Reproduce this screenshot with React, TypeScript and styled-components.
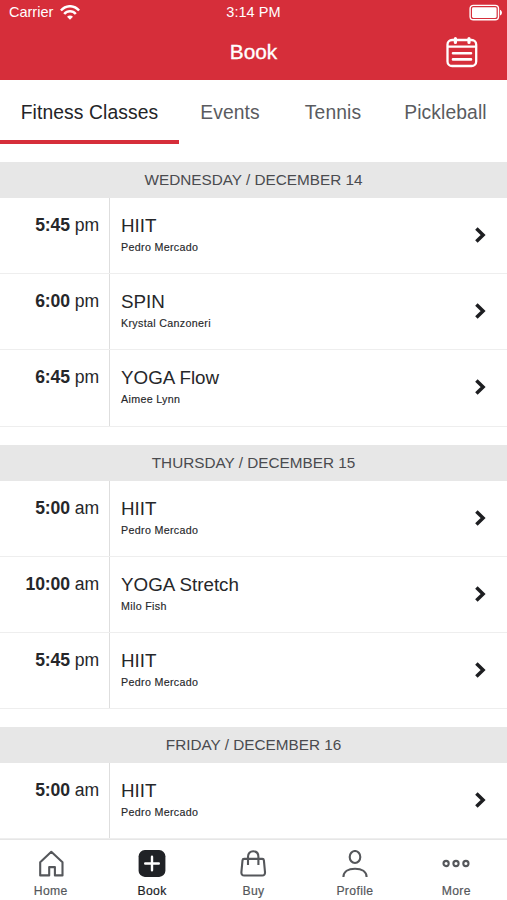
import React from "react";
import styled, { createGlobalStyle } from "styled-components";

const GlobalStyle = createGlobalStyle`
  * { box-sizing: border-box; }
  body { margin: 0; background: #fff; overflow: hidden; }
  button { font: inherit; color: inherit; background: none; border: 0; padding: 0; }
`;

const Screen = styled.div`
  width: 507px;
  height: 900px;
  display: flex;
  flex-direction: column;
  overflow: hidden;
  background: #fff;
  color: #26272a;
  font-family: "Liberation Sans", Arial, sans-serif;
  white-space: nowrap;
`;

const Top = styled.header`
  flex: none;
  height: 80.4px;
  background: #d62e3a;
  color: #fff;
`;

const StatusBar = styled.div`
  display: grid;
  grid-template-columns: 1fr auto 1fr;
  height: 26px;
  padding: 0 9px;
  font-size: 14.5px;
  line-height: 25px;
`;

const Carrier = styled.div`
  display: flex;
  gap: 7px;
  svg { margin-top: 5px; }
`;

const Clock = styled.div`
  letter-spacing: 0.05px;
`;

const Battery = styled.div`
  display: flex;
  justify-content: flex-end;
  svg { margin: 4px -5px 0 0; }
`;

const TitleBar = styled.div`
  display: grid;
  grid-template-columns: 1fr auto 1fr;
  height: 54px;
  padding: 0 29px;
`;

const Title = styled.h1`
  margin: 0;
  font-size: 20.8px;
  font-weight: 400;
  line-height: 52px;
  -webkit-text-stroke: 0.35px #fff;
`;

const CalendarButton = styled.button`
  justify-self: end;
  grid-column: 3;
  height: 32px;
  margin-top: 10px;
  svg { display: block; }
`;

const Tabs = styled.nav`
  flex: none;
  display: flex;
  height: 63.6px;
`;

const Tab = styled.button<{ $width: number; $active?: boolean }>`
  flex: none;
  width: ${(p) => p.$width}px;
  font-size: 19.3px;
  line-height: 22px;
  padding: ${(p) => (p.$active ? "5px 0 0" : "5px 0 4px")};
  border-bottom: ${(p) => (p.$active ? "4px solid #d62e3a" : "0")};
  letter-spacing: 0.1px;
  color: ${(p) => (p.$active ? "#232427" : "#5a5b60")};
`;

const Schedule = styled.main`
  flex: none;
  height: 695px;
  padding-top: 18px;
  overflow: hidden;
`;

const Day = styled.section`
  margin-bottom: 18.1px;
`;

const DayHeading = styled.h2`
  margin: 0;
  height: 36px;
  background: #e7e7e7;
  color: #4a4b4f;
  font-size: 15.3px;
  font-weight: 400;
  line-height: 36px;
  text-align: center;
`;

const Row = styled.article`
  display: grid;
  grid-template-columns: 110px 1fr 34px;
  height: 76.2px;
  border-bottom: 1px solid #eeeeee;
`;

const Time = styled.div`
  padding: 17px 10px 0 0;
  border-right: 1px solid #dedede;
  font-size: 17.6px;
  line-height: 21px;
  letter-spacing: -0.1px;
  text-align: right;
`;

const Details = styled.div`
  padding: 17px 0 0 11px;
`;

const ClassName = styled.div`
  font-size: 18.8px;
  line-height: 22px;
`;

const Instructor = styled.div`
  margin-top: 3px;
  font-size: 10.7px;
  line-height: 14px;
  letter-spacing: 0.33px;
  -webkit-text-stroke: 0.15px #26272a;
`;

const Chevron = styled.svg`
  margin-top: 28px;
`;

const BottomNav = styled.nav`
  flex: none;
  display: grid;
  grid-template-columns: repeat(5, 1fr);
  height: 61px;
  border-top: 1px solid #e6e6e6;
  background: #fff;
`;

const NavItem = styled.button<{ $active?: boolean }>`
  display: flex;
  flex-direction: column;
  align-items: center;
  justify-content: flex-start;
  padding: 10px 0 0;
  font-size: 12.2px;
  line-height: 16px;
  letter-spacing: 0.35px;
  color: ${(p) => (p.$active ? "#202226" : "#55575b")};
  -webkit-text-stroke: 0.2px currentColor;
  svg { display: block; margin-bottom: 5px; }
`;

const WifiIcon = () => (
  <svg width="20" height="15" viewBox="0 0 20 15" fill="none" stroke="#fff" strokeWidth="2.5">
    <path d="M.9 5.5C6-.2 14-.2 19.1 5.5M4.2 9C7.4 5.3 12.6 5.3 15.8 9" />
    <path d="M7 11.8c1.8-1.7 4.2-1.7 6 0l-3 2.9z" fill="#fff" stroke="none" />
  </svg>
);

const BatteryIcon = () => (
  <svg width="34" height="17" viewBox="0 0 34 17" fill="none">
    <rect x="1.1" y="1.4" width="28.4" height="14.4" rx="3.3" stroke="#fff" strokeWidth="1.4" />
    <rect x="3" y="3.3" width="24.6" height="10.6" rx="1.4" fill="#fff" />
    <path d="M31 5.7c2.6.8 2.6 5 0 5.8z" fill="#fff" />
  </svg>
);

const CalendarIcon = () => (
  <svg width="32" height="32" viewBox="0 0 32 32" fill="none" stroke="#fff" strokeWidth="2.3" strokeLinecap="round">
    <rect x="1.5" y="4" width="28.7" height="26" rx="4.6" />
    <path d="M2 10.6h28" />
    <path d="M9.4 2.5v4M23 2.5v4" strokeWidth="3.2" />
    <path d="M7 17.2h18M7 23.4h18" strokeWidth="2.6" />
  </svg>
);

const icons: Record<string, React.ReactNode> = {
  Home: (
    <path d="M3.2 25.4V12.2L14.3 1.8l11.2 10.4v13.2h-7.6v-8.3h-5.7v8.3z" />
  ),
  Book: (
    <>
      <rect x=".6" y=".1" width="26.8" height="26.8" rx="6.2" fill="#202226" stroke="none" />
      <path d="M14 6.7v13.6M7.2 13.5h13.6" stroke="#fff" strokeWidth="2.4" strokeLinecap="round" />
    </>
  ),
  Buy: (
    <>
      <path d="M5.1 8.9h18.2c1 0 1.5.6 1.6 1.5l1.1 11.7c.2 2-.8 3.4-2.8 3.4h-18c-2 0-3-1.4-2.8-3.4l1.1-11.7c.1-.9.6-1.5 1.6-1.5z" />
      <path d="M9 15V6.8c0-3.4 2.1-5.5 5.2-5.5s5.2 2.1 5.2 5.5V15" />
    </>
  ),
  Profile: (
    <>
      <ellipse cx="14" cy="7" rx="5.3" ry="6" />
      <path d="M2.4 27c.1-5.3 4.7-8.3 11.6-8.3s11.5 3 11.6 8.3" />
    </>
  ),
  More: (
    <>
      <circle cx="4.1" cy="13.5" r="2.6" />
      <circle cx="14" cy="13.5" r="2.6" />
      <circle cx="23.9" cy="13.5" r="2.6" />
    </>
  ),
};

const days = [
  {
    date: "WEDNESDAY / DECEMBER 14",
    classes: [
      ["5:45", "pm", "HIIT", "Pedro Mercado"],
      ["6:00", "pm", "SPIN", "Krystal Canzoneri"],
      ["6:45", "pm", "YOGA Flow", "Aimee Lynn"],
    ],
  },
  {
    date: "THURSDAY / DECEMBER 15",
    classes: [
      ["5:00", "am", "HIIT", "Pedro Mercado"],
      ["10:00", "am", "YOGA Stretch", "Milo Fish"],
      ["5:45", "pm", "HIIT", "Pedro Mercado"],
    ],
  },
  {
    date: "FRIDAY / DECEMBER 16",
    classes: [["5:00", "am", "HIIT", "Pedro Mercado"]],
  },
];

export default function App() {
  return (
    <Screen>
      <GlobalStyle />
      <Top>
        <StatusBar>
          <Carrier>Carrier <WifiIcon /></Carrier>
          <Clock>3:14 PM</Clock>
          <Battery><BatteryIcon /></Battery>
        </StatusBar>
        <TitleBar>
          <span />
          <Title>Book</Title>
          <CalendarButton aria-label="Calendar"><CalendarIcon /></CalendarButton>
        </TitleBar>
      </Top>
      <Tabs>
        <Tab $width={179} $active>Fitness Classes</Tab>
        <Tab $width={102}>Events</Tab>
        <Tab $width={104}>Tennis</Tab>
        <Tab $width={121}>Pickleball</Tab>
      </Tabs>
      <Schedule>
        {days.map((day) => (
          <Day key={day.date}>
            <DayHeading>{day.date}</DayHeading>
            {day.classes.map(([time, period, name, instructor]) => (
              <Row key={time + name}>
                <Time><b>{time}</b> {period}</Time>
                <Details>
                  <ClassName>{name}</ClassName>
                  <Instructor>{instructor}</Instructor>
                </Details>
                <Chevron width="14" height="18" viewBox="0 0 14 18" fill="none" stroke="#1d1e21" strokeWidth="3.5">
                  <path d="M3.4 2.4L10.1 9 3.4 15.6" />
                </Chevron>
              </Row>
            ))}
          </Day>
        ))}
      </Schedule>
      <BottomNav>
        {Object.entries(icons).map(([label, icon]) => (
          <NavItem key={label} $active={label === "Book"}>
            <svg width="28" height="28" viewBox="0 0 28 28" fill="none" stroke="#55575b" strokeWidth="2.1" strokeLinejoin="round">
              {icon}
            </svg>
            {label}
          </NavItem>
        ))}
      </BottomNav>
    </Screen>
  );
}
